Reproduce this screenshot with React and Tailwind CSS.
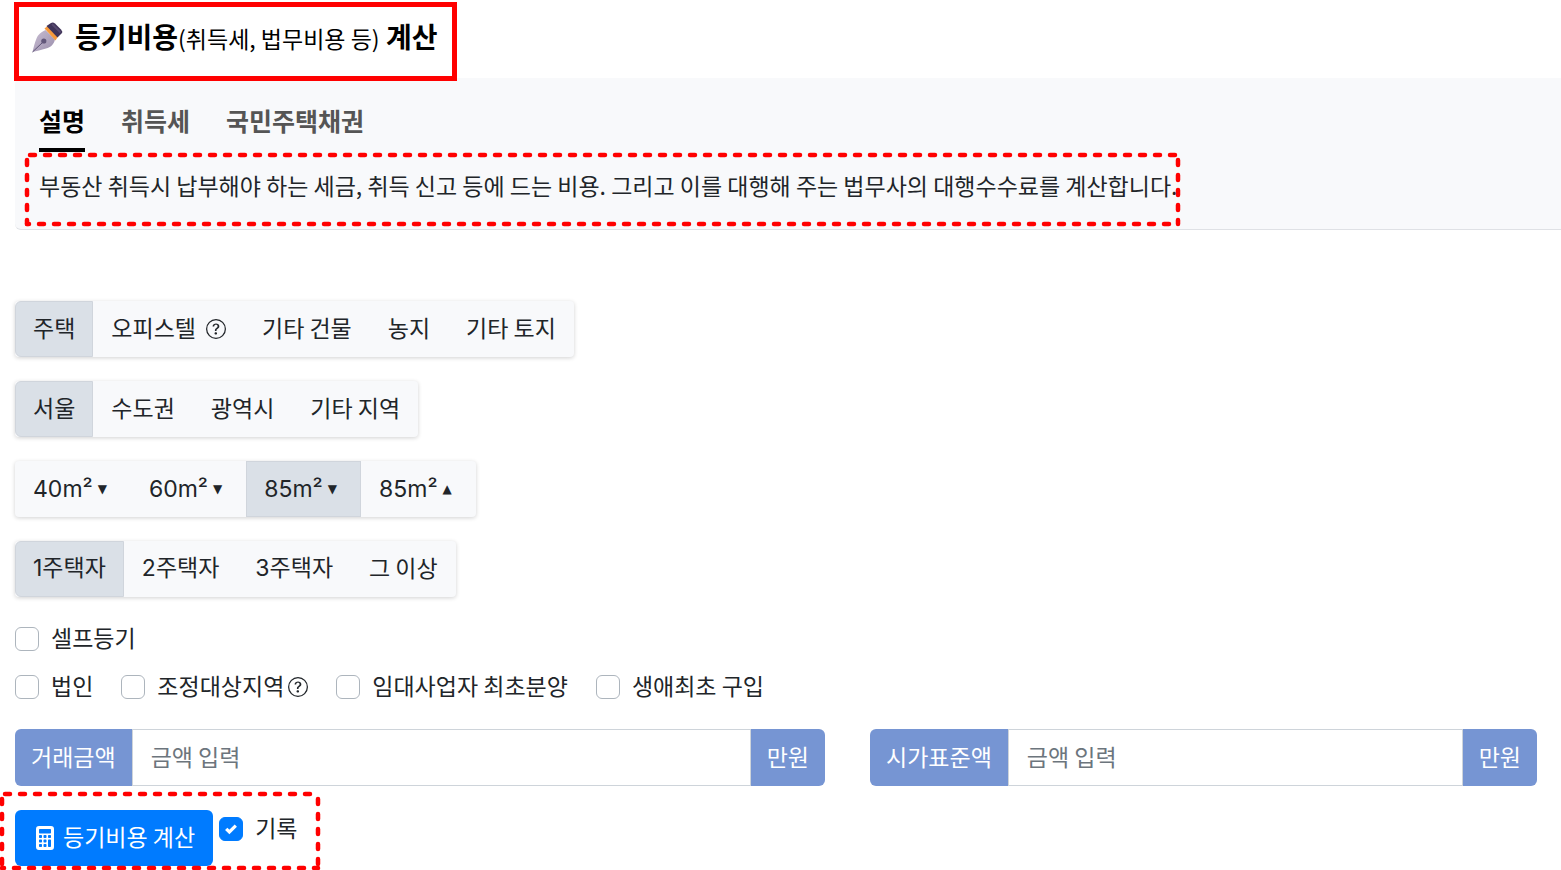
import { useState } from "react";
import { BsQuestionCircle, BsCalculatorFill } from "react-icons/bs";

function PenIcon() {
  return (
    <svg className="h-8 w-8 shrink-0" viewBox="0 0 32 32" aria-hidden="true">
      <defs>
        <linearGradient id="nib" x1="0" y1="0" x2="1" y2="1">
          <stop offset="0" stopColor="#c9bed3" />
          <stop offset="1" stopColor="#9a8eab" />
        </linearGradient>
      </defs>
      <path d="M1.5 30 C2.5 26 3.5 21 5.5 16.5 C7 13 9 11 14.5 8 L24 17.5 C22.5 23 20 25 15 26.5 C10 28 5.5 29 1.5 30 Z" fill="url(#nib)" />
      <path d="M1.5 30 L12 20" stroke="#5d5275" strokeWidth="1" />
      <circle cx="12.8" cy="19" r="2.6" fill="#62577a" />
      <path d="M13.5 6.5 L16.5 4 L27 14.5 L24.5 18.5 Z" fill="#f79a3c" />
      <path d="M15.5 4 L20 1 Q22 0 24 1.5 L30 7.5 Q32 9.5 30.5 11.5 L26.5 15.5 Z" fill="#40345a" />
      <path d="M21 2 L29.5 10.5" stroke="#574a70" strokeWidth="2" />
    </svg>
  );
}

function DashedMark({ className }) {
  const stroke = { stroke: "#ff0000", strokeWidth: 4.5, strokeLinecap: "round", strokeDasharray: "5 10" };
  return (
    <svg className={`pointer-events-none absolute overflow-visible ${className}`} aria-hidden="true">
      <line x1="3" y1="0" x2="100%" y2="0" {...stroke} />
      <line x1="0" y1="5" x2="0" y2="100%" {...stroke} />
      <line x1="100%" y1="5" x2="100%" y2="100%" {...stroke} />
      <line x1="0" y1="100%" x2="100%" y2="100%" {...stroke} strokeDashoffset="3" />
    </svg>
  );
}

function Segmented({ name, options, initial }) {
  const [selected, setSelected] = useState(initial);
  return (
    <div role="group" aria-label={name} className="flex w-fit rounded-sm bg-[#f8f9fb] shadow-[0_1px_4px_rgba(0,0,0,0.18)]">
      {options.map((option, i) => (
        <button
          key={i}
          type="button"
          aria-pressed={selected === i}
          onClick={() => setSelected(i)}
          className={`flex h-14 items-center border px-[17px] pb-1 first:rounded-l-md ${
            selected === i ? "border-[#d0d5dc] bg-[#dae0e7]" : "border-transparent"
          }`}
        >
          {option}
        </button>
      ))}
    </div>
  );
}

function Area({ size, mark }) {
  return (
    <span className="flex items-center gap-[5px] pt-1 pr-[6px] font-['Inter','Noto_Sans_CJK_KR',sans-serif]">
      {size}m²<span className="font-['DejaVu_Sans',sans-serif] text-[12px]">{mark}</span>
    </span>
  );
}

function Owner({ count }) {
  return (
    <span>
      <span className="font-['Inter',sans-serif]">{count}</span>주택자
    </span>
  );
}

function Check({ label, help, defaultChecked }) {
  return (
    <label className="flex h-6 items-center gap-3">
      <span className="relative flex h-6 w-6">
        <input
          type="checkbox"
          defaultChecked={defaultChecked}
          className="peer h-6 w-6 appearance-none rounded-md border border-[#adb5bd] bg-white checked:border-[#007bff] checked:bg-[#007bff]"
        />
        <svg className="pointer-events-none absolute inset-0 hidden h-6 w-6 peer-checked:block" viewBox="0 0 24 24" aria-hidden="true">
          <path d="M7.2 11.8 L10.4 15 L16.8 8.6" fill="none" stroke="#fff" strokeWidth="3.2" />
        </svg>
      </span>
      <span className="flex items-center gap-1">
        <span className="pb-1">{label}</span>
        {help && <BsQuestionCircle className="h-5 w-5" />}
      </span>
    </label>
  );
}

function Amount({ id, label }) {
  return (
    <div className="flex h-[57px] min-w-0">
      <label htmlFor={id} className="flex shrink-0 items-center rounded-l-md bg-[#7695d3] px-4 pb-1 text-white">
        {label}
      </label>
      <input
        id={id}
        type="text"
        placeholder="금액 입력"
        className="min-w-0 flex-1 border border-[#ced4da] px-[18px] pb-1 placeholder:text-[#6c757d]"
      />
      <span className="flex shrink-0 items-center rounded-r-md bg-[#7695d3] px-4 pb-1 text-white">만원</span>
    </div>
  );
}

export default function App() {
  const [tab, setTab] = useState(0);
  return (
    <main className="overflow-x-hidden bg-white pb-1 pl-[15px] font-['Noto_Sans_CJK_KR',sans-serif] text-[23px] leading-8 text-[#212529]">
      <header className="relative flex h-[78px] items-start pt-5 pl-4">
        <h1 className="flex items-center gap-3 text-black">
          <PenIcon />
          <span className="pb-[2px] text-[28px] font-bold">
            등기비용<span className="text-[23px] font-normal">(취득세, 법무비용 등)</span> 계산
          </span>
        </h1>
        <div className="pointer-events-none absolute top-[2px] -left-px z-10 h-[79px] w-[443px] border-5 border-[#ff0000]" />
      </header>

      <section className="relative h-[152px] rounded-l-md border-b border-[#dfe1e5] bg-[#f8f9fb] px-6 pt-6">
        <nav className="flex gap-9 text-[25px] font-bold">
          {["설명", "취득세", "국민주택채권"].map((name, i) => (
            <button
              key={name}
              type="button"
              onClick={() => setTab(i)}
              className={`h-[50px] border-b-4 pb-[10px] ${tab === i ? "border-black text-black" : "border-transparent text-[#555555]"}`}
            >
              {name}
            </button>
          ))}
        </nav>
        <p className="pt-[17px] whitespace-nowrap">
          부동산 취득시 납부해야 하는 세금, 취득 신고 등에 드는 비용. 그리고 이를 대행해 주는 법무사의 대행수수료를 계산합니다.
        </p>
        <DashedMark className="top-[77px] left-3 h-[69px] w-[1151px]" />
      </section>

      <form className="pt-[71px] pr-6" onSubmit={(e) => e.preventDefault()}>
        <div className="flex flex-col gap-6">
          <Segmented
            name="부동산 종류"
            initial={0}
            options={[
              "주택",
              <span className="flex items-center gap-[10px]">
                오피스텔
                <span className="pt-1">
                  <BsQuestionCircle className="h-5 w-5" />
                </span>
              </span>,
              "기타 건물",
              "농지",
              "기타 토지",
            ]}
          />
          <Segmented name="지역" initial={0} options={["서울", "수도권", "광역시", "기타 지역"]} />
          <Segmented
            name="면적"
            initial={2}
            options={[<Area size="40" mark="▼" />, <Area size="60" mark="▼" />, <Area size="85" mark="▼" />, <Area size="85" mark="▲" />]}
          />
          <Segmented
            name="주택 수"
            initial={0}
            options={[<Owner count="1" />, <Owner count="2" />, <Owner count="3" />, "그 이상"]}
          />
        </div>

        <div className="flex flex-col gap-6 pt-[30px]">
          <Check label="셀프등기" />
          <div className="flex flex-wrap gap-7">
            <Check label="법인" />
            <Check label="조정대상지역" help />
            <Check label="임대사업자 최초분양" />
            <Check label="생애최초 구입" />
          </div>
        </div>

        <div className="grid grid-cols-[810fr_667fr] gap-[45px] pt-[30px]">
          <Amount id="price" label="거래금액" />
          <Amount id="standard" label="시가표준액" />
        </div>

        <div className="relative flex items-start gap-[6px] pt-6">
          <button type="submit" className="flex h-14 items-center gap-[6px] rounded-md bg-[#007bff] px-[18px] text-white">
            <BsCalculatorFill className="h-6 w-6" />
            <span className="pb-1">등기비용 계산</span>
          </button>
          <div className="pt-[7px]">
            <Check label="기록" defaultChecked />
          </div>
          <DashedMark className="top-2 -left-[13px] h-[74px] w-[316px]" />
        </div>
      </form>
    </main>
  );
}
